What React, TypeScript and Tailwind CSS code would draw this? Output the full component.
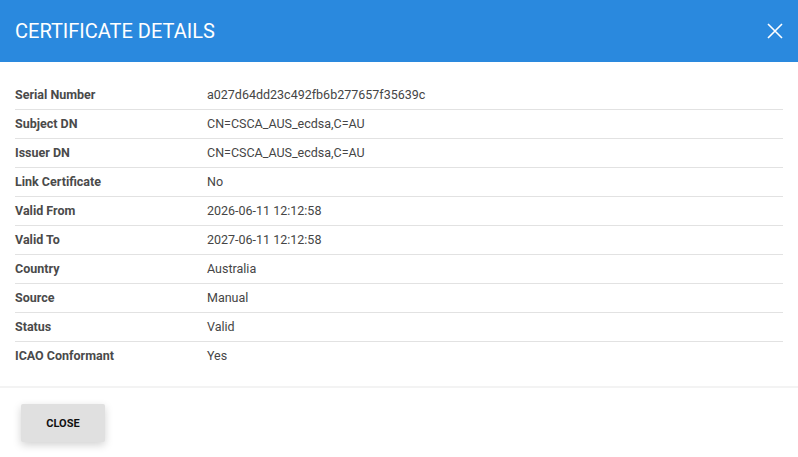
import React from "react";

const rows: [string, string][] = [
  ["Serial Number", "a027d64dd23c492fb6b277657f35639c"],
  ["Subject DN", "CN=CSCA_AUS_ecdsa,C=AU"],
  ["Issuer DN", "CN=CSCA_AUS_ecdsa,C=AU"],
  ["Link Certificate", "No"],
  ["Valid From", "2026-06-11 12:12:58"],
  ["Valid To", "2027-06-11 12:12:58"],
  ["Country", "Australia"],
  ["Source", "Manual"],
  ["Status", "Valid"],
  ["ICAO Conformant", "Yes"],
];

export default function App() {
  return (
    <div className="w-[798px] h-[457px] bg-white font-['Roboto',sans-serif] overflow-hidden">
      <div className="h-[62px] bg-[#2a89de] flex items-center justify-between pl-[15px] pr-[15px]">
        <h1 className="text-white text-[20px] leading-none font-normal">CERTIFICATE DETAILS</h1>
        <svg width="16" height="16" viewBox="0 0 16 16">
          <path d="M1 1L15 15M15 1L1 15" stroke="white" strokeWidth="1.6" />
        </svg>
      </div>
      <div className="pt-[19px] px-[15px] pb-[15px]">
        {rows.map(([k, v], i) => (
          <div
            key={k}
            className={`flex items-center h-[29px] text-[12.5px] ${i < rows.length - 1 ? "border-b border-[#e2e2e2]" : ""}`}
          >
            <div className="w-[192px] font-bold text-[#4a4a4a]">{k}</div>
            <div className="text-[#454545]">{v}</div>
          </div>
        ))}
      </div>
      <div className="h-[2px] bg-[#f3f3f3]" />
      <div className="pt-[16px] pl-[21px]">
        <button className="w-[84px] h-[38px] pt-[2px] bg-[#e0e0e0] rounded-[2px] text-[11px] font-bold text-[#111] shadow-[0_3px_8px_rgba(0,0,0,0.18)]">
          CLOSE
        </button>
      </div>
    </div>
  );
}
